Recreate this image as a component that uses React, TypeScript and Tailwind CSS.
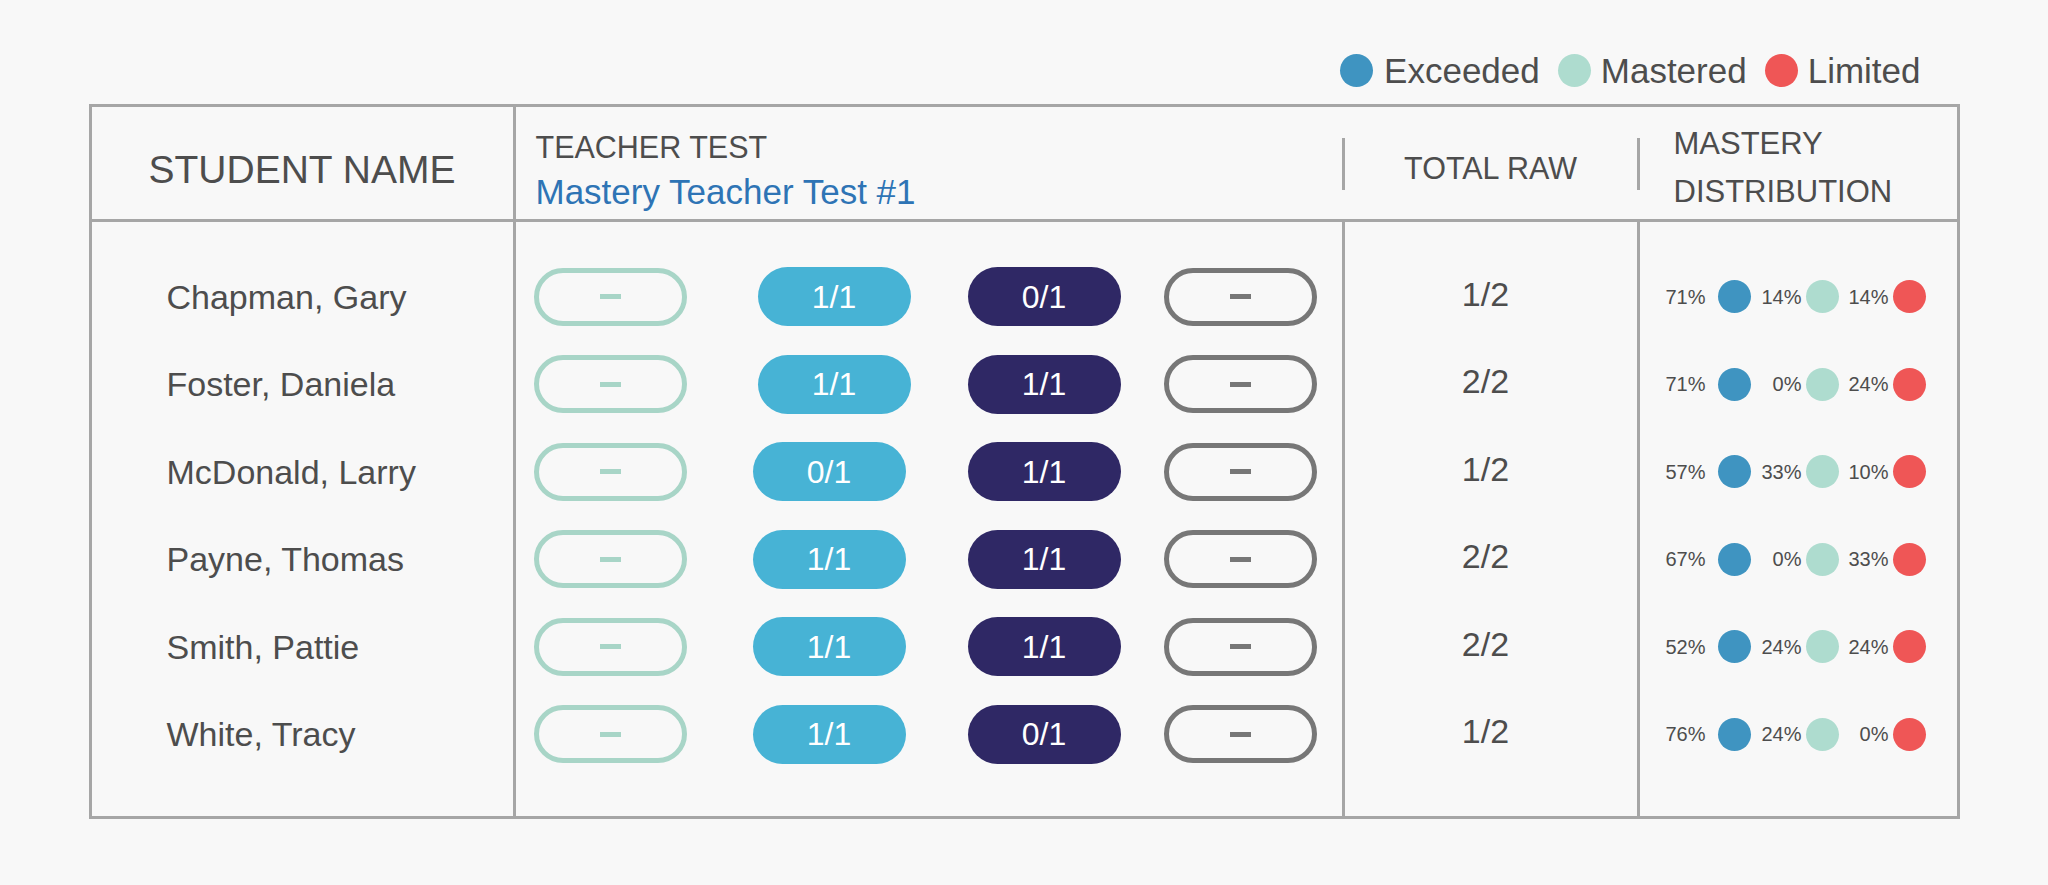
import React from 'react';

type Score = string | null;

interface StudentRow {
  name: string;
  scores: [Score, Score, Score, Score];
  total: string;
  dist: [string, string, string];
  shift?: boolean;
}

const rows: StudentRow[] = [
  { name: 'Chapman, Gary', scores: [null, '1/1', '0/1', null], total: '1/2', dist: ['71%', '14%', '14%'] },
  { name: 'Foster, Daniela', scores: [null, '1/1', '1/1', null], total: '2/2', dist: ['71%', '0%', '24%'] },
  { name: 'McDonald, Larry', scores: [null, '0/1', '1/1', null], total: '1/2', dist: ['57%', '33%', '10%'], shift: true },
  { name: 'Payne, Thomas', scores: [null, '1/1', '1/1', null], total: '2/2', dist: ['67%', '0%', '33%'], shift: true },
  { name: 'Smith, Pattie', scores: [null, '1/1', '1/1', null], total: '2/2', dist: ['52%', '24%', '24%'], shift: true },
  { name: 'White, Tracy', scores: [null, '1/1', '0/1', null], total: '1/2', dist: ['76%', '24%', '0%'], shift: true },
];

const font = { fontFamily: '"Liberation Sans", Arial, sans-serif' };

function Dot({ color }: { color: string }) {
  return <span className={`block w-[33px] h-[33px] rounded-full shrink-0 ${color}`} />;
}

function EmptyPill({ tone }: { tone: 'teal' | 'gray' }) {
  const border = tone === 'teal' ? 'border-[#a8d5c7]' : 'border-[#777777]';
  const bar = tone === 'teal' ? 'bg-[#a8d5c7]' : 'bg-[#777777]';
  return (
    <div className={`w-[153px] h-[58px] rounded-full border-[5px] ${border} flex items-center justify-center`}>
      <span className={`block w-[21px] h-[5px] ${bar}`} />
    </div>
  );
}

function FilledPill({ label, tone }: { label: string; tone: 'blue' | 'navy' }) {
  const bg = tone === 'blue' ? 'bg-[#47b3d5]' : 'bg-[#2f2865]';
  return (
    <div className={`w-[153px] h-[59px] rounded-full ${bg} flex items-center justify-center text-white text-[32px] leading-none`}>
      {label}
    </div>
  );
}

export default function App() {
  return (
    <div className="min-h-screen bg-[#f8f8f8] pt-[50px] text-[#4d4d4d]" style={font}>
      <div className="mx-auto w-[1871px]">
        {/* legend */}
        <div className="flex justify-end items-center h-[40px] pr-[39px] mb-[14px] text-[35px] leading-none">
          <Dot color="bg-[#3f94c1]" />
          <span className="ml-[11px]">Exceeded</span>
          <span className="ml-[18px]"><Dot color="bg-[#aedccf]" /></span>
          <span className="ml-[10px]">Mastered</span>
          <span className="ml-[18px]"><Dot color="bg-[#ef5656]" /></span>
          <span className="ml-[10px]">Limited</span>
        </div>

        <div className="border-[3px] border-[#a6a6a6]">
          {/* header */}
          <div className="flex h-[115px] border-b-[3px] border-[#a6a6a6] pt-[10px]">
            <div className="w-[424px] -mt-[10px] pt-[12px] border-r-[3px] border-[#a6a6a6] flex items-center justify-center text-[39px] leading-none">
              STUDENT NAME
            </div>
            <div className="w-[826px] pl-[20px] pt-[5px] flex flex-col justify-center">
              <div className="text-[30.5px] leading-none">TEACHER TEST</div>
              <div className="text-[35px] leading-none mt-[12px] text-[#2e74b5]">Mastery Teacher Test #1</div>
            </div>
            <div className="w-[3px] h-[52px] self-center -mt-[8px] bg-[#a6a6a6]" />
            <div className="w-[292px] flex items-center justify-center text-[30.5px] leading-none">
              TOTAL RAW
            </div>
            <div className="w-[3px] h-[52px] self-center -mt-[8px] bg-[#a6a6a6]" />
            <div className="w-[317px] pl-[34px] flex flex-col justify-center text-[31px] leading-none">
              <div className="-mt-[2px]">MASTERY</div>
              <div className="mt-[17px]">DISTRIBUTION</div>
            </div>
          </div>

          {/* body */}
          <div className="flex">
            <div className="w-[424px] border-r-[3px] border-[#a6a6a6] pt-[31px] pb-[38px]">
              {rows.map((r) => (
                <div key={r.name} className="h-[87.5px] flex items-center pl-[75px] text-[34px] leading-none">
                  {r.name}
                </div>
              ))}
            </div>

            <div className="w-[829px] border-r-[3px] border-[#a6a6a6] pt-[31px] pb-[38px]">
              {rows.map((r) => (
                <div key={r.name} className="h-[87.5px] flex items-center pl-[18px]">
                  <EmptyPill tone="teal" />
                  <div className={r.shift ? 'ml-[66px]' : 'ml-[71px]'}>
                    <FilledPill label={r.scores[1] ?? ''} tone="blue" />
                  </div>
                  <div className={r.shift ? 'ml-[62px]' : 'ml-[57px]'}>
                    <FilledPill label={r.scores[2] ?? ''} tone="navy" />
                  </div>
                  <div className="ml-[43px]">
                    <EmptyPill tone="gray" />
                  </div>
                </div>
              ))}
            </div>

            <div className="w-[295px] border-r-[3px] border-[#a6a6a6] pt-[31px] pb-[38px]">
              {rows.map((r) => (
                <div key={r.name} className="h-[87.5px] flex items-center justify-center pr-[10px] text-[34px] leading-none">
                  <span className="-mt-[6px]">{r.total}</span>
                </div>
              ))}
            </div>

            <div className="w-[317px] pt-[31px] pb-[38px]">
              {rows.map((r) => (
                <div key={r.name} className="h-[87.5px] flex items-center pl-[11px] text-[20px] leading-none">
                  <span className="w-[55px] text-right">{r.dist[0]}</span>
                  <span className="ml-[12px]"><Dot color="bg-[#3f94c1]" /></span>
                  <span className="w-[51px] text-right">{r.dist[1]}</span>
                  <span className="ml-[4px]"><Dot color="bg-[#aedccf]" /></span>
                  <span className="w-[50px] text-right">{r.dist[2]}</span>
                  <span className="ml-[4px]"><Dot color="bg-[#ef5656]" /></span>
                </div>
              ))}
            </div>
          </div>
        </div>
      </div>
    </div>
  );
}
